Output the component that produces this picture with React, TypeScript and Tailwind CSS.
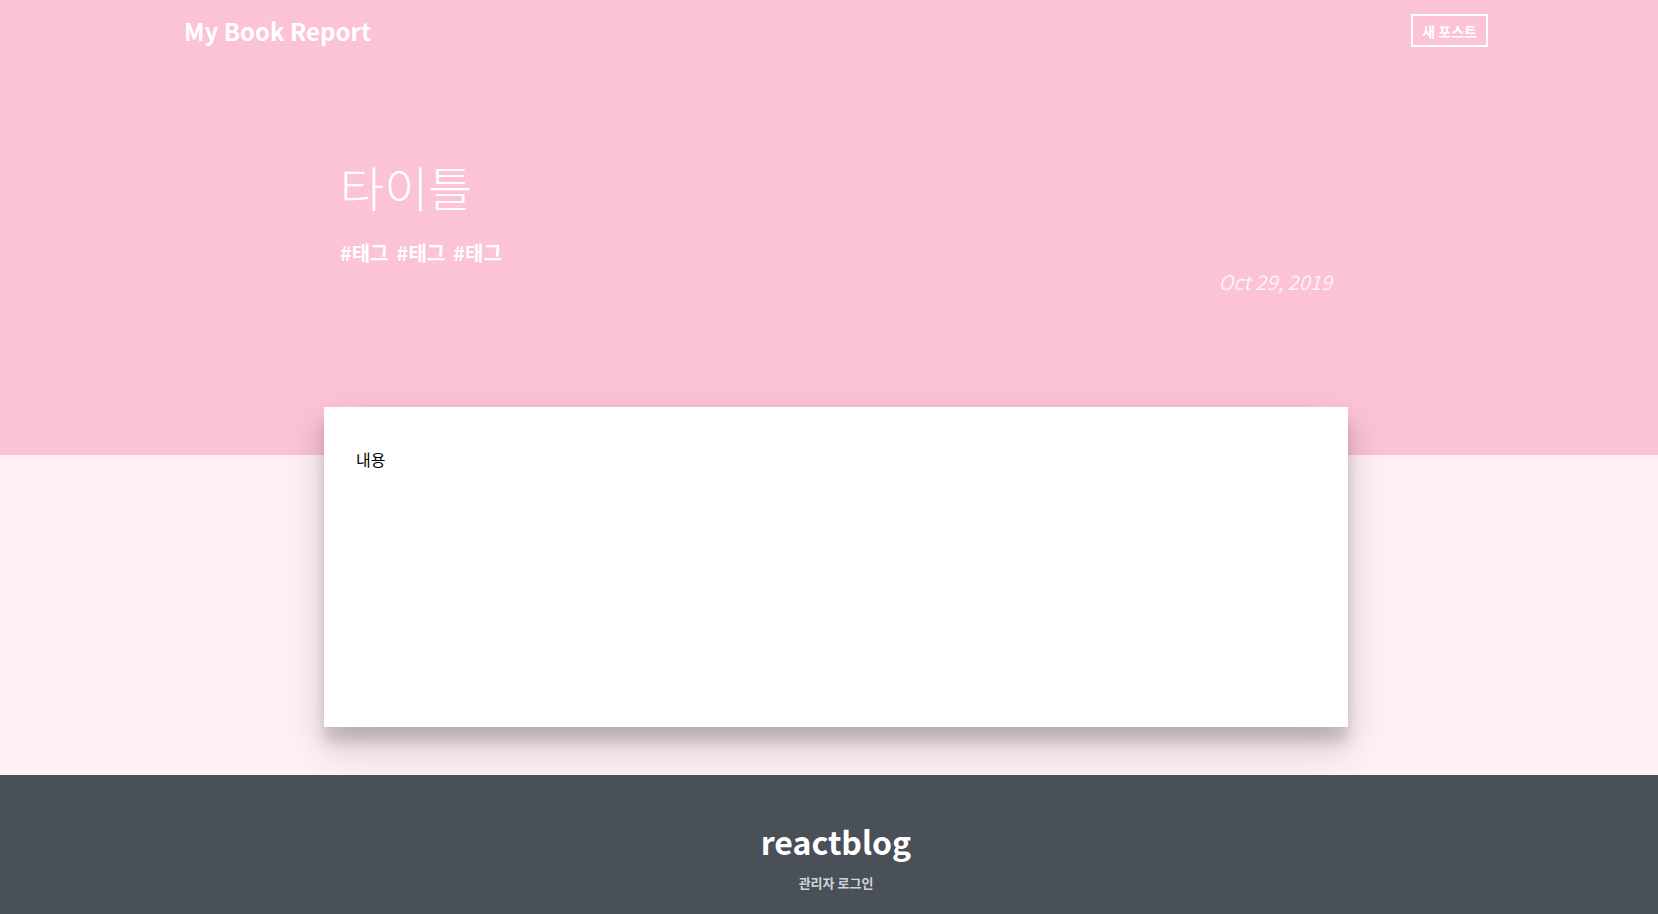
import React from "react";

const font = { fontFamily: '"Noto Sans CJK KR", "Noto Sans", sans-serif' };

export default function App() {
  return (
    <div className="w-full overflow-hidden" style={font}>
      <div className="w-[1672px]">
        <section className="bg-[#fcc2d7] h-[455px]">
          <header className="w-[1304px] mx-auto h-[62px] flex items-center justify-between">
            <div className="text-white font-bold text-[24px] leading-none">My Book Report</div>
            <button className="border-2 border-white text-white font-bold text-[14px] h-[33px] px-[9px] leading-none -mt-[1px]">
              새 포스트
            </button>
          </header>
          <div className="w-[1024px] mx-auto px-4 pt-[100px]">
            <h1 className="text-white font-light text-[48px] leading-none">타이틀</h1>
            <div className="flex gap-[8px] mt-[33px] text-white font-bold text-[20px] leading-none">
              <span>#태그</span>
              <span>#태그</span>
              <span>#태그</span>
            </div>
            <div className="text-right text-[#fff0f6] italic text-[20px] leading-none mt-[9px]">Oct 29, 2019</div>
          </div>
        </section>
        <section className="bg-[#fff0f6] pb-[48px] flow-root">
          <div className="w-[1024px] h-[320px] mx-auto -mt-[48px] bg-white relative shadow-[0_19px_38px_rgba(0,0,0,0.18),0_15px_12px_rgba(0,0,0,0.14)] px-8 pt-[40px]">
            <p className="text-black text-[16px] leading-[1.5]">내용</p>
          </div>
        </section>
        <footer className="bg-[#495057] h-[160px] flex flex-col items-center pt-[50px]">
          <div className="text-white font-bold text-[32px] leading-none">reactblog</div>
          <div className="text-[#ced4da] font-bold text-[13px] leading-none mt-[19px]">관리자 로그인</div>
        </footer>
      </div>
    </div>
  );
}
